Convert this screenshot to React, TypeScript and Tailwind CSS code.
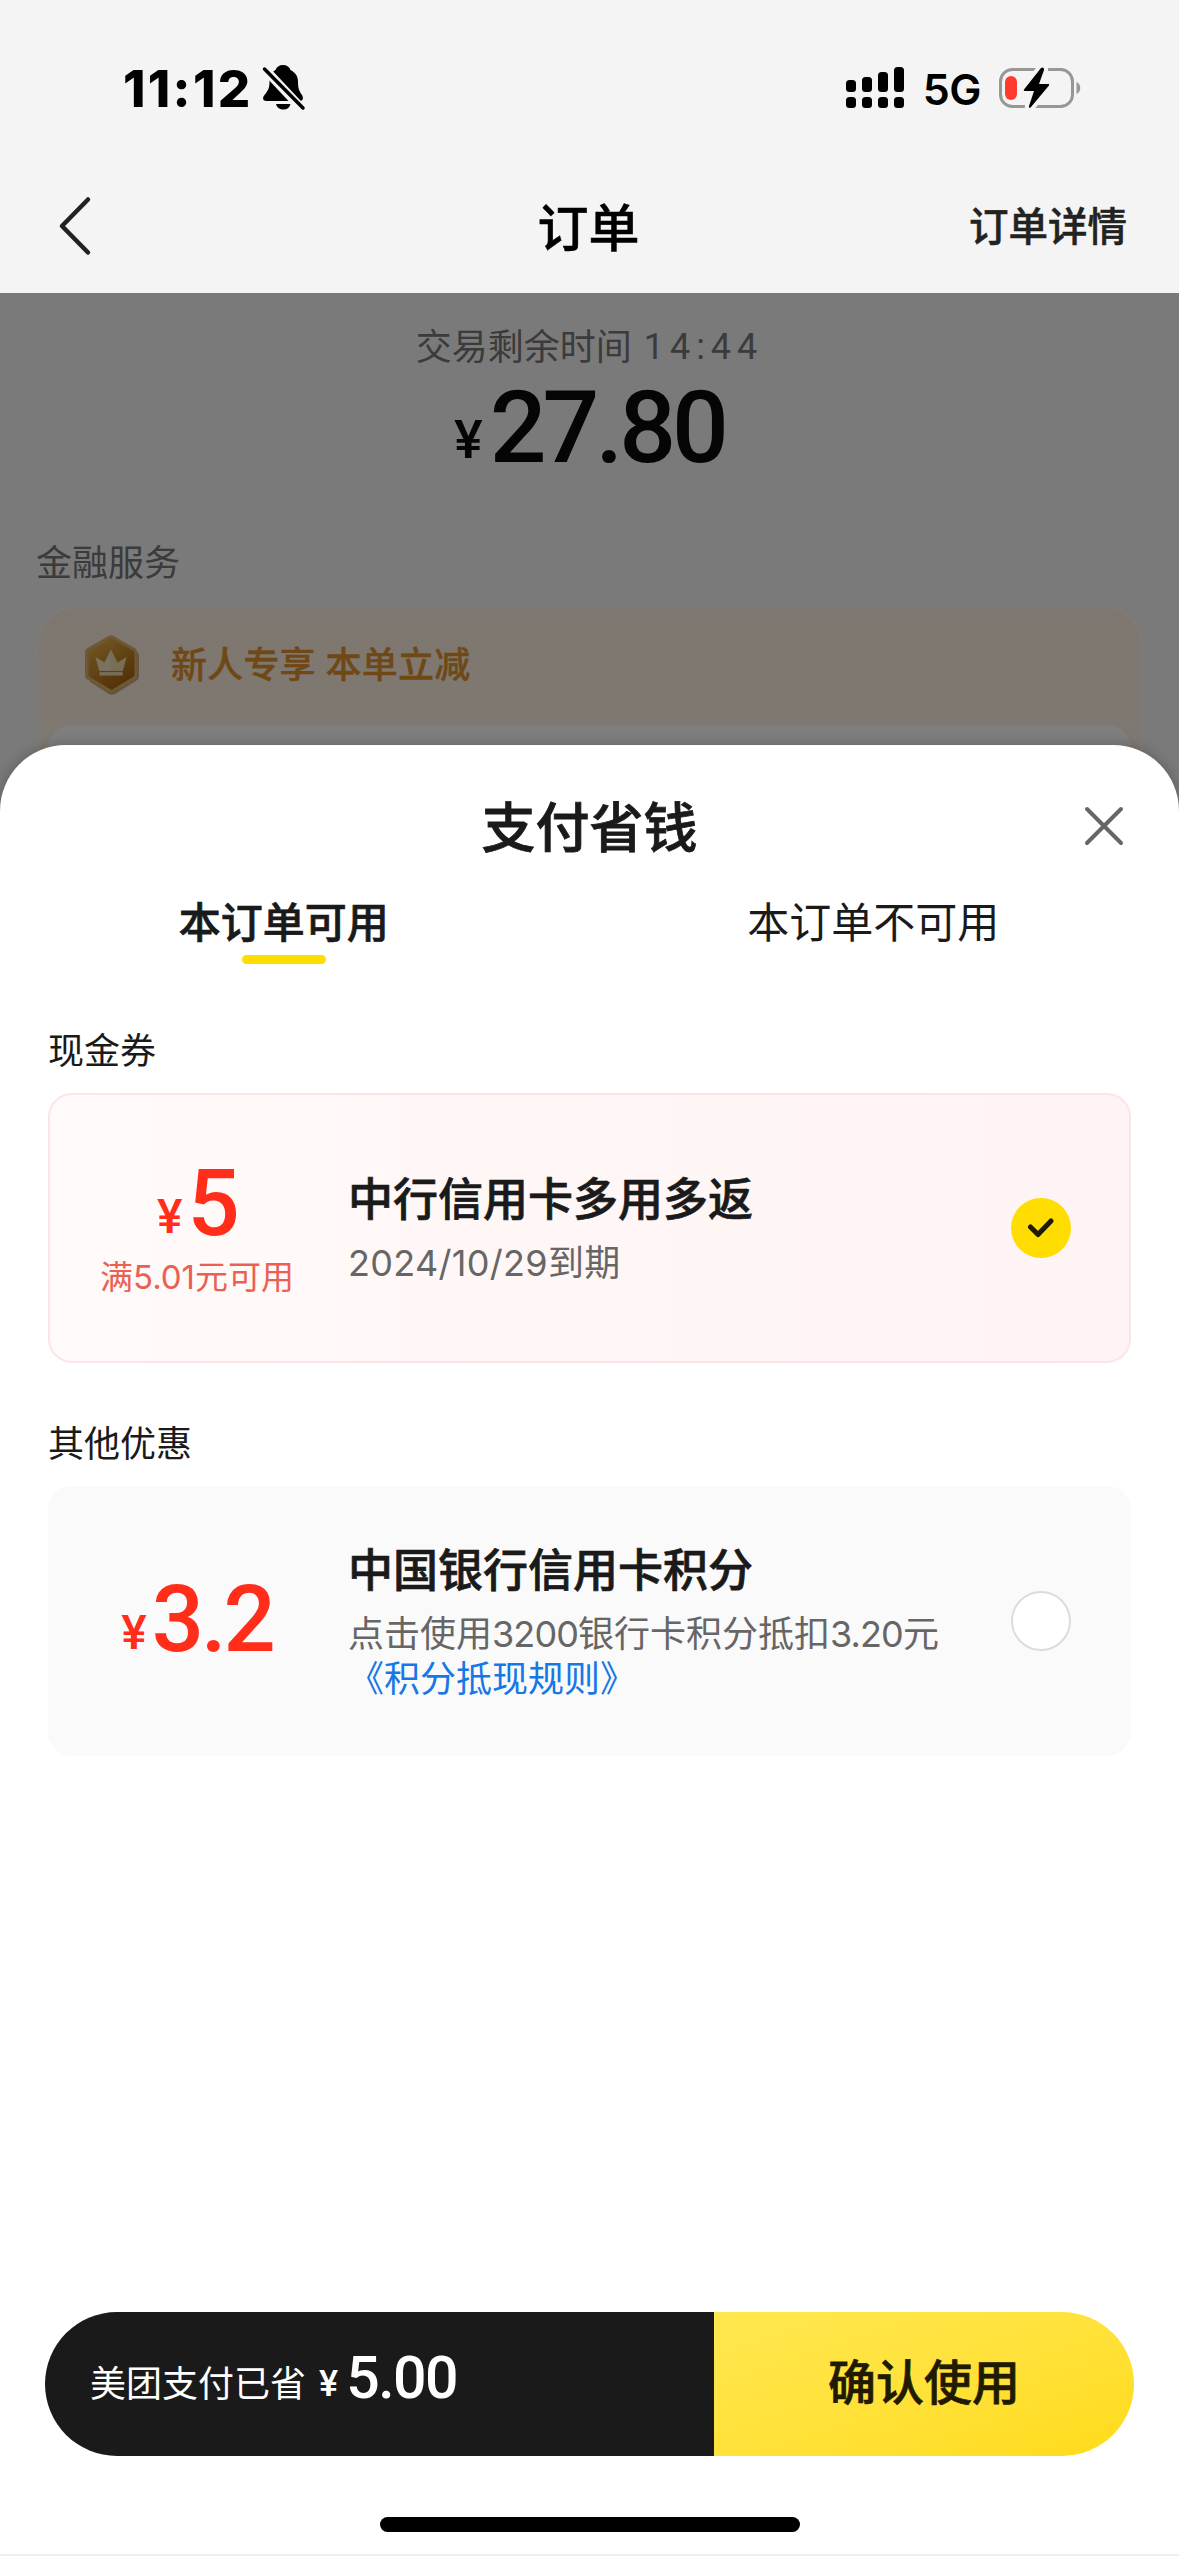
import type { ReactNode } from 'react';

function StatusBar() {
  return (
    <div className="flex h-[176px] items-center justify-between pl-[123px] pr-[98px]">
      <div className="flex items-center gap-[9px]">
        <span className="font-['Inter',sans-serif] text-[51px] font-extrabold leading-none tracking-[2.3px] text-black">11:12</span>
        <svg className="mt-[2px]" width="44" height="50" viewBox="0 0 44 50">
          <path
            d="M21 1c-4 0-6.500 2-7.500 5C9 8.500 7.500 12.500 7.500 17.500c0 7-1.500 9-5 13.500C0 34 1 37 4.500 37h33c4 0 4-3.500 2.500-6-3-4.500-4-6.500-4-13.500 0-5-2.500-9-7.500-11.500C27.500 3 25 1 21 1z"
            fill="#000"
          />
          <path d="M14 40h14.500c-1 3.800-3.500 5.500-7 5.500s-6.500-1.700-7.500-5.500z" fill="#000" />
          <path d="M-1 1l44 47" stroke="#f4f4f4" strokeWidth="9" />
          <path d="M2.500 5l38.500 39" stroke="#000" strokeWidth="3.500" strokeLinecap="round" />
        </svg>
      </div>
      <div className="flex items-center">
        <svg width="58" height="42" viewBox="0 0 58 42">
          <rect x="0" y="13" width="10" height="12" rx="3.500" />
          <rect x="16" y="10" width="10" height="15" rx="3.500" />
          <rect x="32" y="5" width="10" height="20" rx="3.500" />
          <rect x="48" y="0" width="10" height="25" rx="3.500" />
          <rect x="0" y="30" width="10" height="11" rx="3.500" />
          <rect x="16" y="30" width="10" height="11" rx="3.500" />
          <rect x="32" y="30" width="10" height="11" rx="3.500" />
          <rect x="48" y="30" width="10" height="11" rx="3.500" />
        </svg>
        <span className="ml-[19px] pt-[3px] font-['Inter',sans-serif] text-[43px] font-semibold leading-none tracking-[-0.5px] text-black">5G</span>
        <svg className="ml-[18px]" width="82" height="42" viewBox="0 0 82 42">
          <rect x="1.500" y="2.500" width="72" height="37" rx="12" fill="none" stroke="#979797" strokeWidth="3" />
          <path d="M77.500 15c5 2 5 10 0 12z" fill="#979797" />
          <path
            d="M42 1L25 22.500c-.5 1 0 1.500 1 1.500h9l-5 15c-.5 2 1 2.500 2 1l18-21.500c.5-1 0-1.500-1-1.500h-9L45 3c.5-2-1.500-3.500-3-2z"
            fill="#000"
            stroke="#f4f4f4"
            strokeWidth="8"
            paintOrder="stroke"
          />
          <rect x="6" y="9" width="12" height="24" rx="6" fill="#ff3b30" />
        </svg>
      </div>
    </div>
  );
}

function NavBar() {
  return (
    <div className="grid h-[117px] grid-cols-3 items-center pb-[13px] [-webkit-text-stroke:0.5px]">
      <svg className="mb-[5px] ml-[58px]" width="34" height="60" viewBox="0 0 34 60">
        <path d="M30 3.500L4 30l26 26.500" fill="none" stroke="#222" strokeWidth="4.500" strokeLinecap="round" strokeLinejoin="round" />
      </svg>
      <h1 className="pr-[2px] text-center text-[51px] font-medium leading-none text-black">订单</h1>
      <span className="pr-[52px] text-right text-[39.5px] font-medium leading-none text-[#222]">订单详情</span>
    </div>
  );
}

function CrownBadge() {
  return (
    <svg width="56" height="62" viewBox="0 0 56 62">
      <defs>
        <linearGradient id="badge" x1="0" y1="0" x2="0.6" y2="1">
          <stop offset="0" stopColor="#eab44c" />
          <stop offset="1" stopColor="#a8640f" />
        </linearGradient>
      </defs>
      <path d="M28 4l24 13q3 1.500 3 4v21q0 3-3 5L31 60q-3 1.500-6 0L6 48z" fill="#a87a3c" opacity="0.6" />
      <path d="M25 1.800q2-1.200 4 0l22 12.500q2 1.200 2 3.500v24q0 2.300-2 3.500L29 58q-2 1.200-4 0L3 45.300q-2-1.200-2-3.500v-24q0-2.300 2-3.500z" fill="#dcae68" />
      <path d="M26 5q1.500-1 3 0l20 11.500q1.500 1 1.500 2.500v21.500q0 1.500-1.500 2.500L29 55q-1.500 1-3 0L6 43q-1.500-1-1.500-2.500V19q0-1.500 1.500-2.500z" fill="url(#badge)" />
      <path d="M11.500 23l9 5.500 6.500-13 6.500 13 9-5.500-4 15H15.500z" fill="#f0dcae" />
      <path d="M27 15.500V38H15.500l-4-15 9 5.500z" fill="#fff" opacity="0.25" />
      <path d="M15.500 38h23v3.500h-23z" fill="#f0dcae" />
      <path d="M15 37.500h24" stroke="#b9823a" strokeWidth="1.200" />
    </svg>
  );
}

function OrderBackdrop() {
  return (
    <div className="relative h-[520px] bg-[#f4f4f4]">
      <div className="flex h-[107px] items-center justify-center text-[36px] leading-none text-[#767676]">
        <span>交易剩余时间</span>
        <span className="ml-[12px] font-['Roboto',sans-serif] font-normal tracking-[6px]">14:44</span>
      </div>
      <div className="-mt-[18px] flex h-[91px] items-baseline justify-center font-['Roboto',sans-serif] font-medium leading-[91px] text-[#0a0a0a]">
        <span className="relative -top-[4px] text-[54px]">¥</span>
        <span className="ml-[7px] text-[100px] tracking-[-4px]">27.80</span>
      </div>
      <p className="mt-[72px] px-9 text-[36px] leading-[36px] text-[#767676]">金融服务</p>
      <div className="mx-9 mt-[24px] h-[208px] rounded-t-[40px] border-[3px] border-b-0 border-[#fffdfb]/40 bg-linear-to-b from-[#fdefe2] to-[#fbf3e4] px-[9px]">
        <div className="flex h-[117px] items-center pb-[3px] pl-[36px]">
          <CrownBadge />
          <span className="ml-[31px] text-[36px] font-medium leading-none tracking-[0.2px] text-[#e0902c] [-webkit-text-stroke:0.4px]">新人专享 本单立减</span>
        </div>
        <div className="h-[88px] rounded-t-[24px] bg-white" />
      </div>
      <div className="absolute inset-0 bg-black/50" />
    </div>
  );
}

function Price({ value }: { value: string }) {
  return (
    <div className="flex items-baseline font-['Roboto',sans-serif] font-medium leading-[92px] text-[#ff2d19]">
      <span className="relative -top-[2px] text-[48px]">¥</span>
      <span className="ml-[5px] text-[92px] tracking-[-3px]">{value}</span>
    </div>
  );
}

function Radio({ checked }: { checked: boolean }) {
  if (!checked) {
    return <span className="size-[60px] rounded-full border-2 border-[#dcdcdc] bg-white" />;
  }

  return (
    <span className="flex size-[60px] items-center justify-center rounded-full bg-[#ffdd00]">
      <svg width="28" height="22" viewBox="0 0 28 22">
        <path d="M3.500 10l7.500 7.500L24 4" fill="none" stroke="#1f1a00" strokeWidth="5" strokeLinecap="round" strokeLinejoin="round" />
      </svg>
    </span>
  );
}

type CouponProps = {
  amount: string;
  condition?: string;
  title: string;
  checked?: boolean;
  children: ReactNode;
};

function Coupon({ amount, condition, title, checked = false, children }: CouponProps) {
  return (
    <div
      className={
        checked
          ? 'flex h-[270px] items-center rounded-[24px] border-2 border-[#fde4e6] bg-linear-to-r from-[#fffbfa] via-[#fff6f6] to-[#fef3f5] pr-[58px]'
          : 'flex h-[270px] items-center rounded-[24px] border-2 border-[#fafafa] bg-[#fafafa] pr-[58px]'
      }
    >
      <div className={condition ? 'flex w-[294px] flex-col items-center pb-1' : 'flex w-[294px] flex-col items-center pt-3'}>
        <Price value={amount} />
        {condition && <p className="-mt-[6px] text-[33px] leading-[36px] text-[#ea6153]">{condition}</p>}
      </div>
      <div className="ml-[4px] flex-1 pt-[3px]">
        <h3 className="text-[45px] font-medium leading-[54px] text-[#1a1a1a] [-webkit-text-stroke:0.7px]">{title}</h3>
        <div className="mt-[14px] text-[36px] leading-[45px] text-[#666]">{children}</div>
      </div>
      <Radio checked={checked} />
    </div>
  );
}

function SavingsSheet() {
  return (
    <div className="relative -mt-[68px] flex flex-1 flex-col rounded-t-[66px] bg-white shadow-[0_0_14px_rgba(0,0,0,0.25)]">
      <div className="grid h-[165px] grid-cols-[1fr_auto_1fr] items-center">
        <h2 className="col-start-2 pt-[3px] text-[54px] font-medium leading-none text-[#1a1a1a] [-webkit-text-stroke:0.8px]">支付省钱</h2>
        <svg className="mb-[3px] mr-[54px] justify-self-end" width="42" height="42" viewBox="0 0 42 42">
          <path d="M4 4l34 34M38 4L4 38" stroke="#666" strokeWidth="4" strokeLinecap="round" />
        </svg>
      </div>

      <div className="grid h-[54px] grid-cols-2 text-[42px] leading-[26px] text-[#1a1a1a]">
        <div className="flex flex-col items-center gap-[19px] pr-[22px]">
          <span className="font-medium [-webkit-text-stroke:0.7px]">本订单可用</span>
          <span className="h-[9px] w-[84px] rounded-full bg-[#ffdd00]" />
        </div>
        <div className="flex flex-col items-center pr-[22px]">本订单不可用</div>
      </div>

      <div className="px-12 pt-[69px]">
        <h4 className="text-[36px] leading-[36px] text-[#1a1a1a]">现金券</h4>
        <div className="pt-[24px]">
          <Coupon amount="5" condition="满5.01元可用" title="中行信用卡多用多返" checked>
            <span className="tracking-[0.3px]">2024/10/29到期</span>
          </Coupon>
        </div>
        <h4 className="mt-[63px] text-[36px] leading-[36px] text-[#1a1a1a]">其他优惠</h4>
        <div className="pt-[24px]">
          <Coupon amount="3.2" title="中国银行信用卡积分">
            <p>
              点击使用<span className="tracking-[-0.9px]">3200</span>银行卡积分抵扣
              <span className="tracking-[-0.9px]">3.20</span>元
            </p>
            <p className="text-[#1677e6]">《积分抵现规则》</p>
          </Coupon>
        </div>
      </div>

      <div className="mx-[45px] mb-[61px] mt-auto flex h-[144px] overflow-hidden rounded-full">
        <div className="flex w-[669px] items-center bg-[#1a1a1a] pl-[45px] text-white">
          <span className="text-[36px] leading-none">美团支付已省</span>
          <div className="-mt-[4px] flex items-baseline font-['Roboto',sans-serif] font-medium leading-[60px]">
            <span className="relative -top-[2px] ml-[13px] text-[36px]">¥</span>
            <span className="ml-2 text-[59px] tracking-[-1.5px]">5.00</span>
          </div>
        </div>
        <button className="flex-1 bg-linear-to-br from-[#ffe84f] to-[#ffdb16] pb-[3px] text-[48px] font-medium leading-none text-[#1f1a00] [-webkit-text-stroke:0.7px]">
          确认使用
        </button>
      </div>
      <div className="mx-auto mb-[22px] h-[15px] w-[420px] rounded-full bg-black" />
      <div className="h-[2px] bg-[#efefef]" />
    </div>
  );
}

export default function App() {
  return (
    <div className="flex h-[2556px] w-[1179px] flex-col overflow-hidden bg-[#f4f4f4] font-['Inter','Noto_Sans_CJK_SC',sans-serif]">
      <StatusBar />
      <NavBar />
      <OrderBackdrop />
      <SavingsSheet />
    </div>
  );
}
